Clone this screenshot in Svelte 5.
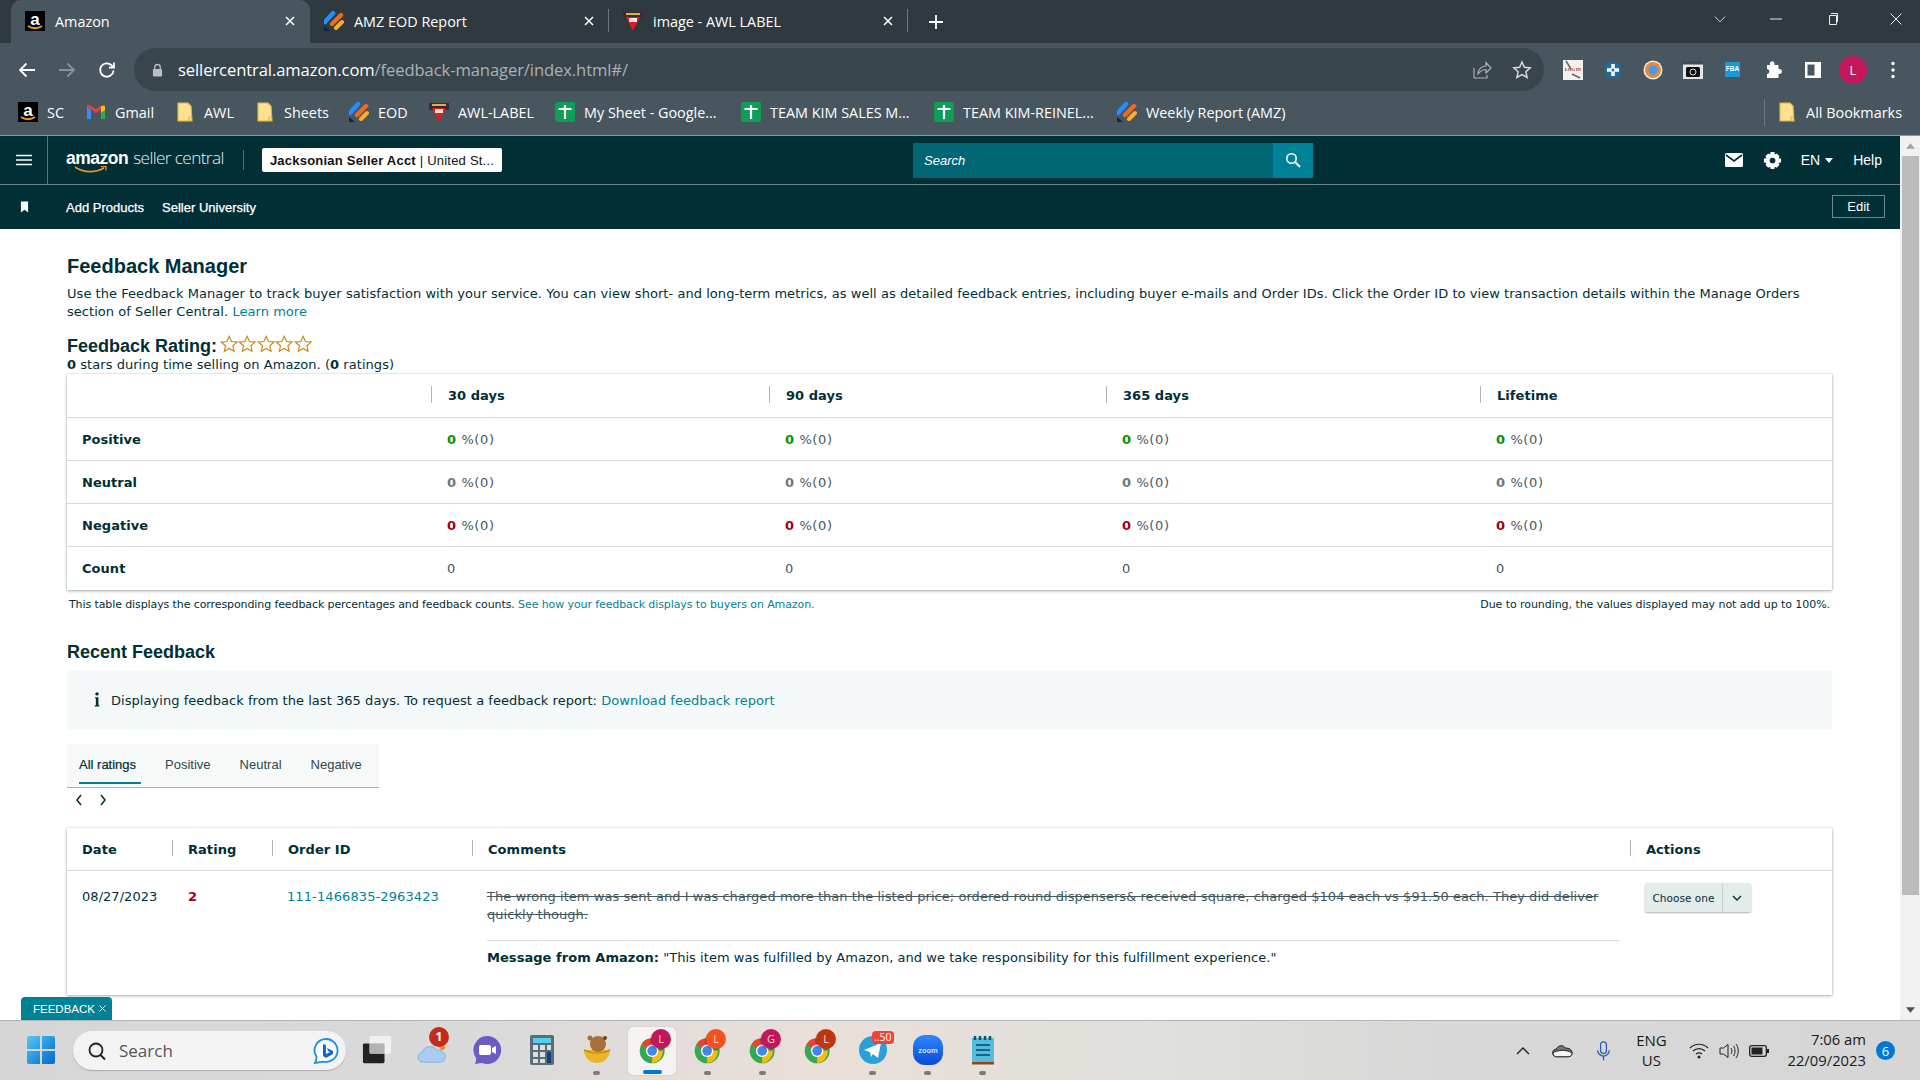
<script>
  const tabs = [
    { icon: 'amazon', title: 'Amazon', active: true },
    { icon: 'eod', title: 'AMZ EOD Report' },
    { icon: 'awl', title: 'image - AWL LABEL' }
  ];
  const marks = [
    { icon: 'amazon', label: 'SC', w: 68 },
    { icon: 'gmail', label: 'Gmail', w: 89 },
    { icon: 'folder', label: 'AWL', w: 80 },
    { icon: 'folder', label: 'Sheets', w: 94 },
    { icon: 'eod', label: 'EOD', w: 80 },
    { icon: 'awl', label: 'AWL-LABEL', w: 126 },
    { icon: 'sheet', label: 'My Sheet - Google...', w: 186 },
    { icon: 'sheet', label: 'TEAM KIM SALES M...', w: 193 },
    { icon: 'sheet', label: 'TEAM KIM-REINEL...', w: 183 },
    { icon: 'eod', label: 'Weekly Report (AMZ)', w: 200 }
  ];
  const ratingCols = ['30 days', '90 days', '365 days', 'Lifetime'];
  const ratingRows = [
    { name: 'Positive', cls: 'good' },
    { name: 'Neutral', cls: 'neutral' },
    { name: 'Negative', cls: 'bad' }
  ];
  const chromes = [
    { badge: 'L', col: '#c2185b', cls: 'tile' },
    { badge: 'L', col: '#f4511e', cls: '' },
    { badge: 'G', col: '#c2185b', cls: '' },
    { badge: 'L', col: '#bf360c', cls: '' }
  ];
</script>

{#snippet favicon(kind)}
  {#if kind === 'amazon'}
    <svg class="fav" viewBox="0 0 20 20"><rect width="20" height="20" fill="#000"/><text x="10" y="13.5" text-anchor="middle" class="favA">a</text><path d="M3 15c4 3 10 3 14 0" fill="none" stroke="#f09a1a" stroke-width="1.8"/></svg>
  {:else if kind === 'eod'}
    <svg class="fav" viewBox="0 0 20 20"><path d="M1 11 9 2" stroke="#1e90ff" stroke-width="4.4" stroke-linecap="round"/><path d="M8 13 17 4" stroke="#f26a1b" stroke-width="4.4" stroke-linecap="round"/><path d="M12 17 18 11" stroke="#f9b02a" stroke-width="4" stroke-linecap="round"/><path d="M0 15 6 20H0z" fill="#12214e"/></svg>
  {:else if kind === 'awl'}
    <svg class="fav" viewBox="0 0 20 20"><rect y="1" width="20" height="7" fill="#3b2a33"/><path d="M3 6h14l-7 14z" fill="#e01b24"/><path d="M6 7h8v4H6z" fill="#f5e5e5"/><rect x="3" y="2" width="14" height="2" fill="#e0b040"/></svg>
  {:else if kind === 'gmail'}
    <svg class="fav" viewBox="0 0 20 20"><path d="M1 4v13h4V8z" fill="#4285f4"/><path d="M19 4v13h-4V8z" fill="#34a853"/><path d="M1 4l9 7 9-7-1.500-1.500L10 7 2.500 2.500z" fill="#ea4335"/><path d="M15 4h4v4l-4 3z" fill="#fbbc04"/></svg>
  {:else if kind === 'folder'}
    <svg class="fav" viewBox="0 0 20 20"><path d="M3 1h10l3 3 1 15H3z" fill="#fde293" stroke="#e2b53f" stroke-width="1.200"/><path d="M14 19v-4h3" fill="none" stroke="#e2b53f" stroke-width="1.200"/></svg>
  {:else if kind === 'sheet'}
    <svg class="fav" viewBox="0 0 20 20"><rect width="20" height="20" rx="2" fill="#0f9d58"/><path d="M3.500 7h13M10 3v14" stroke="#fff" stroke-width="2.200"/></svg>
  {/if}
{/snippet}

{#snippet chrome(b)}
  <svg class="appicon" viewBox="0 0 36 36">
    <circle cx="17" cy="19" r="15" fill="#34a853"/>
    <path d="M17 19 4 11.500A15 15 0 0 1 30 11.500z" fill="#ea4335"/>
    <path d="M17 19H30A15 15 0 0 1 17 34z" fill="#fbbc04"/>
    <circle cx="17" cy="19" r="7.500" fill="#fff"/>
    <circle cx="17" cy="19" r="5.800" fill="#4285f4"/>
  </svg>
  <span class="dotbadge" style="background:{b.col}">{b.badge}</span>
{/snippet}

<div class="screen">
  <!-- Browser chrome -->
  <header class="tabstrip">
    {#each tabs as t, i}
      <div class="tab" class:active={t.active}>
        {@render favicon(t.icon)}
        <span class="tabtitle">{t.title}</span>
        <svg class="tabx" viewBox="0 0 10 10"><path d="M1 1l8 8M9 1l-8 8" stroke="#fff" stroke-width="1.500"/></svg>
        {#if i > 0}<i class="tabsep"></i>{/if}
      </div>
    {/each}
    <svg class="plus" viewBox="0 0 16 16"><path d="M8 1v14M1 8h14" stroke="#fff" stroke-width="1.800"/></svg>
    <div class="winctl">
      <svg viewBox="0 0 12 12" class="w1"><path d="M1 3.500 6 9l5-5.500" fill="none" stroke="#c8cdd0"/></svg>
      <svg viewBox="0 0 12 12" class="w2"><path d="M0 6h12" stroke="#e8eaeb"/></svg>
      <svg viewBox="0 0 12 12" class="w3"><path d="M2.500 2.500h7v9h-7zM4 .5h6.500V9" fill="none" stroke="#e8eaeb"/></svg>
      <svg viewBox="0 0 12 12" class="w4"><path d="M.5.500l11 11M11.500.5l-11 11" stroke="#e8eaeb"/></svg>
    </div>
  </header>

  <div class="toolbar">
    <svg class="navb" viewBox="0 0 20 20"><path d="M18 10H3M9.500 3.500 3 10l6.500 6.500" fill="none" stroke="#fff" stroke-width="1.800"/></svg>
    <svg class="navb" viewBox="0 0 20 20"><path d="M2 10h15M10.500 3.500 17 10l-6.500 6.500" fill="none" stroke="#87929a" stroke-width="1.800"/></svg>
    <svg class="navb" viewBox="0 0 20 20"><path d="M16.500 10.500a6.700 6.700 0 1 1-2-5.300L17 7.500M17 2.500v5h-5" fill="none" stroke="#fff" stroke-width="1.800"/></svg>
    <div class="omni">
      <svg class="lock" viewBox="0 0 12 14"><path d="M3 6V4a3 3 0 0 1 6 0v2" fill="none" stroke="#b8bec2" stroke-width="1.400"/><rect x="1" y="6" width="10" height="8" rx="1" fill="#b8bec2"/></svg>
      <span class="url"><b>sellercentral.amazon.com</b>/feedback-manager/index.html#/</span>
      <svg class="share" viewBox="0 0 20 20"><path d="M2 8v10h13v-3M6 14c0-5 4-8 8-8V2.500l5 5.500-5 5V9.500c-4 0-6 2-8 4.500z" fill="none" stroke="#aab1b6" stroke-width="1.200"/></svg>
      <svg class="star" viewBox="0 0 20 20"><path d="M10 2l2.400 5.300 5.800.6-4.300 3.900 1.200 5.700-5.100-2.900-5.100 2.900 1.200-5.700L1.800 7.900l5.800-.6z" fill="none" stroke="#d5d9dc" stroke-width="1.500"/></svg>
    </div>
    <div class="exts">
      <span class="ext"><svg viewBox="0 0 20 20"><rect width="20" height="20" fill="#f4f1ec"/><path d="M3 1l5 8M9 14l8 4" stroke="#666" stroke-width="1.500"/><text x="10" y="11" text-anchor="middle" class="login">LOG IN</text></svg></span>
      <span class="ext"><svg viewBox="0 0 20 20"><circle cx="10" cy="10" r="8.500" fill="#1c6da3"/><path d="M10 4v12M4 10h12" stroke="#fff" stroke-width="3.500"/><circle cx="10" cy="10" r="1.500" fill="#1c6da3"/></svg></span>
      <span class="ext"><svg viewBox="0 0 20 20"><circle cx="10" cy="10" r="9.500" fill="#eef0ef"/><circle cx="10" cy="10" r="8" fill="#e8883a"/><circle cx="10" cy="10" r="4.500" fill="#3f9cf0"/></svg></span>
      <span class="ext"><svg viewBox="0 0 20 20"><rect y="1" width="20" height="18" fill="#e4e7e7"/><rect y="1" width="20" height="3.500" fill="#46485a"/><rect x="3" y="7" width="14" height="10" rx="1.500" fill="#111"/><circle cx="10" cy="12" r="3" fill="none" stroke="#ddd"/></svg></span>
      <span class="ext"><svg viewBox="0 0 20 20"><rect x="2" y="2" width="15" height="15" fill="#169bd7"/><text x="9.500" y="11" text-anchor="middle" class="fba">FBA</text></svg></span>
      <span class="ext"><svg viewBox="0 0 20 20"><path d="M7 3a2.300 2.300 0 0 1 4.500 0v2h4v4h1a2.500 2.500 0 0 1 0 5h-1v4H4v-4a2.500 2.500 0 0 0 0-5V5h3z" fill="#fff"/></svg></span>
      <span class="ext"><svg viewBox="0 0 20 20"><path d="M2 2h16v16H2zM4.500 4.500v11h7v-11z" fill="#fff" fill-rule="evenodd"/></svg></span>
      <span class="ext"><span class="avatar">L</span></span>
      <span class="ext"><svg viewBox="0 0 20 20"><circle cx="10" cy="3.500" r="1.700" fill="#fff"/><circle cx="10" cy="10" r="1.700" fill="#fff"/><circle cx="10" cy="16.500" r="1.700" fill="#fff"/></svg></span>
    </div>
  </div>

  <div class="bookmarks">
    {#each marks as m}
      <div class="mark" style="width:{m.w}px">{@render favicon(m.icon)}<span>{m.label}</span></div>
    {/each}
    <i class="marksep"></i>
    <div class="mark allmarks">{@render favicon('folder')}<span>All Bookmarks</span></div>
  </div>

  <!-- Page viewport -->
  <div class="viewport">
    <div class="page">
      <nav class="topnav">
        <div class="burger"><svg viewBox="0 0 16 12"><path d="M0 1.500h16M0 6h16M0 10.500h16" stroke="#fff" stroke-width="1.600"/></svg></div>
        <div class="logo">
          <span class="lgA">amazon</span><span class="lgB">seller central</span>
          <svg class="smile" viewBox="0 0 34 8"><path d="M1 1c9 6 20 6 29 1" fill="none" stroke="#e8912d" stroke-width="1.600"/><path d="M27 .500h5v4" fill="none" stroke="#e8912d" stroke-width="1.300"/></svg>
        </div>
        <i class="navsep"></i>
        <div class="acct"><b>Jacksonian Seller Acct</b> | United St...</div>
        <div class="search">
          <span class="searchin">Search</span>
          <span class="searchbtn"><svg viewBox="0 0 16 16"><circle cx="6.500" cy="6.500" r="4.700" fill="none" stroke="#fff" stroke-width="1.600"/><path d="M10 10l5 5" stroke="#fff" stroke-width="2"/></svg></span>
        </div>
        <div class="navright">
          <svg class="mail" viewBox="0 0 18 14"><rect width="18" height="14" rx="1.500" fill="#fff"/><path d="M1 2l8 6 8-6" fill="none" stroke="#002f36" stroke-width="1.600"/></svg>
          <svg class="gear" viewBox="0 0 20 20"><path d="M8 1h4l.500 2.600 2-1 2.900 2.900-1.200 2.100L19 8v4l-2.800.500 1.200 2.100-2.900 2.900-2-1L12 19H8l-.5-2.500-2 1-2.900-2.900 1.200-2.100L1 12V8l2.800-.4-1.200-2.100 2.900-2.900 2 1z" fill="#fff"/><circle cx="10" cy="10" r="3" fill="#002f36"/></svg>
          <span class="lang">EN</span><i class="caret"></i>
          <span class="help">Help</span>
        </div>
      </nav>
      <nav class="subnav">
        <svg class="bm" viewBox="0 0 10 12"><path d="M1 0h8v12L5 9l-4 3z" fill="#fff"/></svg>
        <a>Add Products</a>
        <a>Seller University</a>
        <span class="editbtn">Edit</span>
      </nav>

      <main class="content">
        <h1>Feedback Manager</h1>
        <p class="intro">Use the Feedback Manager to track buyer satisfaction with your service. You can view short- and long-term metrics, as well as detailed feedback entries, including buyer e-mails and Order IDs. Click the Order ID to view transaction details within the Manage Orders section of Seller Central. <a>Learn more</a></p>
        <div class="ratinghead">
          <h2>Feedback Rating:</h2>
          <div class="stars">
            {#each Array(5) as _}
              <svg viewBox="0 0 20 20"><path d="M10 1.500l2.500 5.600 6 .6-4.500 4 1.300 6L10 14.600l-5.300 3.100 1.300-6-4.500-4 6-.6z" fill="none" stroke="#c98a1c" stroke-width="1.300"/></svg>
            {/each}
          </div>
        </div>
        <p class="sub"><b>0</b> stars during time selling on Amazon. (<b>0</b> ratings)</p>

        <table class="card metrics">
          <colgroup><col style="width:364px"/><col style="width:338px"/><col style="width:337px"/><col style="width:374px"/><col/></colgroup>
          <thead>
            <tr><th></th>{#each ratingCols as c}<th class="sep">{c}</th>{/each}</tr>
          </thead>
          <tbody>
            {#each ratingRows as r}
              <tr>
                <th>{r.name}</th>
                {#each ratingCols as c}<td class="sep"><b class={r.cls}>0</b> %(0)</td>{/each}
              </tr>
            {/each}
            <tr><th>Count</th>{#each ratingCols as c}<td class="sep">0</td>{/each}</tr>
          </tbody>
        </table>
        <div class="tablenote">
          <span>This table displays the corresponding feedback percentages and feedback counts. <a>See how your feedback displays to buyers on Amazon.</a></span>
          <span>Due to rounding, the values displayed may not add up to 100%.</span>
        </div>

        <h2 class="recent">Recent Feedback</h2>
        <div class="info">
          <svg viewBox="0 0 6 16"><circle cx="3" cy="2" r="1.800" fill="#002f36"/><path d="M1 5.500h3.500V14H5.500v1.500H.6V14h1.200V7H1z" fill="#002f36"/></svg>
          <span>Displaying feedback from the last 365 days. To request a feedback report: <a>Download feedback report</a></span>
        </div>

        <div class="rtabs">
          <span class="rtab on">All ratings</span>
          <span class="rtab">Positive</span>
          <span class="rtab">Neutral</span>
          <span class="rtab">Negative</span>
        </div>
        <div class="pager">
          <svg viewBox="0 0 8 12"><path d="M6 1 2 6l4 5" fill="none" stroke="#002f36" stroke-width="1.500"/></svg>
          <svg viewBox="0 0 8 12"><path d="M2 1l4 5-4 5" fill="none" stroke="#002f36" stroke-width="1.500"/></svg>
        </div>

        <table class="card feed">
          <colgroup><col style="width:105px"/><col style="width:100px"/><col style="width:200px"/><col style="width:1158px"/><col/></colgroup>
          <thead>
            <tr><th>Date</th><th class="sep">Rating</th><th class="sep">Order ID</th><th class="sep">Comments</th><th class="sep">Actions</th></tr>
          </thead>
          <tbody>
            <tr>
              <td>08/27/2023</td>
              <td class="sep"><b class="bad">2</b></td>
              <td class="sep"><a>111-1466835-2963423</a></td>
              <td class="sep cmt">
                <p class="strike">The wrong item was sent and I was charged more than the listed price; ordered round dispensers&amp; received square, charged $104 each vs $91.50 each. They did deliver quickly though.</p>
                <p class="msg"><b>Message from Amazon:</b> "This item was fulfilled by Amazon, and we take responsibility for this fulfillment experience."</p>
              </td>
              <td class="sep act">
                <div class="choose"><span>Choose one</span><i><svg viewBox="0 0 10 6"><path d="M1 1l4 4 4-4" fill="none" stroke="#002f36" stroke-width="1.400"/></svg></i></div>
              </td>
            </tr>
          </tbody>
        </table>
      </main>
      <div class="fbadge">FEEDBACK <svg viewBox="0 0 8 8"><path d="M.5.500l7 7M7.500.5l-7 7" stroke="#fff"/></svg></div>
    </div>
    <div class="scrollbar">
      <svg class="arrow" viewBox="0 0 10 6"><path d="M5 0l5 6H0z" fill="#a3a3a3"/></svg>
      <div class="thumb"></div>
      <svg class="arrow down" viewBox="0 0 10 6"><path d="M5 6 10 0H0z" fill="#505050"/></svg>
    </div>
  </div>

  <!-- Windows taskbar -->
  <footer class="taskbar">
    <div class="slot">
      <svg class="appicon" viewBox="0 0 30 30"><defs><linearGradient id="winG" x1="0" y1="0" x2="1" y2="1"><stop offset="0" stop-color="#53c8f8"/><stop offset="1" stop-color="#0068c8"/></linearGradient></defs><path d="M1 3a2 2 0 0 1 2-2h11v13H1zM16 1h11a2 2 0 0 1 2 2v11H16zM1 16h13v13H3a2 2 0 0 1-2-2zM16 16h13v11a2 2 0 0 1-2 2H16z" fill="url(#winG)"/></svg>
    </div>
    <div class="tsearch">
      <svg class="mag" viewBox="0 0 20 20"><circle cx="9" cy="9" r="6.500" fill="none" stroke="#222" stroke-width="1.800"/><path d="M13.500 14l4.500 4.500" stroke="#222" stroke-width="2"/></svg>
      <span>Search</span>
      <svg class="bing" viewBox="0 0 26 26"><path d="M13 1a11.500 11.500 0 1 1-3 22.600L2 25c1-2 1.500-3 1.600-6A11.500 11.500 0 0 1 13 1z" fill="#fff" stroke="#1b8fe0" stroke-width="1.800"/><path d="M10 6l3 1v9l4-2-2-1-1-3 6 3v3l-7 4-3-2z" fill="#1565d8"/></svg>
    </div>
    <div class="slot">
      <svg class="appicon" viewBox="0 0 32 32"><rect x="1" y="9" width="23" height="21" rx="1.500" fill="#222"/><rect x="8" y="1" width="23" height="19" rx="1.500" fill="#f3f3f3" opacity=".85"/><rect x="8" y="9" width="16" height="11" fill="#aaa" opacity=".8"/></svg>
    </div>
    <div class="slot">
      <svg class="appicon" viewBox="0 0 32 32"><path d="M7 29a5.500 5.500 0 0 1-1-11c1-6 11-8 15-2 5 0 10 3 9 8 0 3-2 5-5 5z" fill="#a9cdf0" stroke="#7eb0e2"/><circle cx="27" cy="13" r="3" fill="#ef8b2c"/></svg>
      <span class="numbadge">1</span>
    </div>
    <div class="slot">
      <svg class="appicon" viewBox="0 0 30 30"><path d="M15 1a14 14 0 1 1-5 27l-7 1c1-2 1-4 1-6A14 14 0 0 1 15 1z" fill="#6a5cc4"/><rect x="7" y="10" width="12" height="10" rx="2" fill="#fff"/><path d="M20 13l4-2v8l-4-2z" fill="#fff"/></svg>
    </div>
    <div class="slot">
      <svg class="appicon" viewBox="0 0 24 30"><rect width="24" height="30" rx="2" fill="#5b6c78"/><rect x="3" y="3" width="18" height="5" fill="#4fd0f0"/><path d="M3 10h5v5H3zM10 10h5v5h-5zM3 17h5v5H3zM10 17h5v5h-5zM3 24h5v4H3zM10 24h5v4h-5zM17 10h4v5h-4z" fill="#d8dfe3"/><rect x="17" y="17" width="4" height="11" fill="#13417f"/></svg>
    </div>
    <div class="slot bear">
      <svg class="appicon" viewBox="0 0 30 30"><path d="M2 15h26a13 13 0 0 1-26 0z" fill="#edb42b"/><circle cx="16" cy="9" r="8" fill="#a5703b"/><circle cx="8" cy="3" r="2.500" fill="#a5703b"/><circle cx="23" cy="3" r="2" fill="#6b4423"/><path d="M2 15c8 4 18 4 26 0" fill="none" stroke="#c48b17" stroke-width="1.500"/></svg>
      <i class="run"></i>
    </div>
    {#each chromes as c, i}
      <div class="slot {c.cls}">
        {@render chrome(c)}
        {#if i === 0}<i class="run on"></i>{:else if i < 3}<i class="run"></i>{/if}
      </div>
    {/each}
    <div class="slot">
      <svg class="appicon" viewBox="0 0 30 30"><circle cx="15" cy="15" r="14" fill="#2a9fd9"/><path d="M6 15l17-7-3 15-5-4-2 3-1-5z" fill="#fff"/></svg>
      <span class="tgbadge">..50</span><i class="run"></i>
    </div>
    <div class="slot">
      <svg class="appicon" viewBox="0 0 30 30"><defs><linearGradient id="zm" x1="0" y1="0" x2="0" y2="1"><stop offset="0" stop-color="#2f86ff"/><stop offset="1" stop-color="#0a4bd8"/></linearGradient></defs><rect width="30" height="30" rx="12" fill="url(#zm)"/><text x="15" y="17.500" text-anchor="middle" class="zoomt">zoom</text></svg>
      <i class="run"></i>
    </div>
    <div class="slot">
      <svg class="appicon" viewBox="0 0 24 30"><rect x="1" y="3" width="22" height="24" fill="#56bbdd"/><rect x="1" y="27" width="22" height="2.500" fill="#8d4a16"/><path d="M4 1v4M9 1v4M14 1v4M19 1v4" stroke="#11506f" stroke-width="2.500"/><path d="M5 10h14M5 15h14M5 20h14" stroke="#11648c" stroke-width="2"/></svg>
      <i class="run"></i>
    </div>

    <div class="tray">
      <svg class="t-chev" viewBox="0 0 14 8"><path d="M1 7l6-6 6 6" fill="none" stroke="#222" stroke-width="1.400"/></svg>
      <svg class="t-cloud" viewBox="0 0 22 14"><path d="M5 13a4 4 0 0 1-.5-8C6 1 12 0 14 4c4-.5 7 2 7 5 0 2-1 4-4 4z" fill="#6f7680" stroke="#222"/><path d="M1 9c4-3 14-4 20 0 0 2-1 4-4 4H5c-2 0-4-1-4-4z" fill="#f5f5f5" stroke="#222"/></svg>
      <svg class="t-mic" viewBox="0 0 16 24"><rect x="4.500" y="1" width="7" height="14" rx="3.500" fill="none" stroke="#2a5db0" stroke-width="1.500"/><path d="M1 11a7 7 0 0 0 14 0M8 18v5" fill="none" stroke="#2a5db0" stroke-width="1.500"/></svg>
      <div class="t-lang"><span>ENG</span><span>US</span></div>
      <svg class="t-wifi" viewBox="0 0 20 16"><path d="M1 5c5-5 13-5 18 0M4 8c3.500-3.200 8.500-3.200 12 0M7 11c2-1.500 4-1.500 6 0" fill="none" stroke="#222" stroke-width="1.200"/><circle cx="10" cy="14" r="1.500" fill="#222"/></svg>
      <svg class="t-vol" viewBox="0 0 20 16"><path d="M1 5h3.500L9 1.500v13L4.500 11H1z" fill="none" stroke="#222"/><path d="M12 5c1.200 2 1.200 4 0 6M14.500 3c2 3 2 7 0 10M17 1c3 4 3 10 0 14" fill="none" stroke="#222"/></svg>
      <svg class="t-bat" viewBox="0 0 20 12"><rect x=".7" y=".7" width="16.600" height="10.600" rx="2" fill="none" stroke="#222" stroke-width="1.300"/><rect x="2.500" y="2.500" width="11" height="7" fill="#222"/><rect x="18" y="4" width="2" height="4" fill="#222"/></svg>
      <div class="t-clock"><span>7:06 am</span><span>22/09/2023</span></div>
      <span class="t-note">6</span>
    </div>
  </footer>
</div>

<style>
  :global(body) { margin: 0; overflow: hidden; }
  .screen { width: 1920px; height: 1080px; display: flex; flex-direction: column; overflow: hidden; font-family: "DejaVu Sans", sans-serif; }
  .fav { width: 20px; height: 20px; flex: none; }
  .favA { font: 700 17px "Liberation Sans", sans-serif; fill: #fff; }

  /* tab strip */
  .tabstrip { height: 43px; background: #2f3a40; display: flex; align-items: stretch; padding-left: 11px; flex: none; }
  .tab { width: 299px; position: relative; display: flex; align-items: center; gap: 10px; padding: 0 0 1px 14px; box-sizing: border-box; color: #fff; font: 14.400px "Open Sans", sans-serif; }
  .tab.active { background: #47565f; border-radius: 10px 10px 0 0; }
  .tabtitle { flex: 1; }
  .tabx { width: 10px; height: 10px; margin-right: 15px; }
  .tabsep { position: absolute; right: 0; top: 9px; bottom: 11px; width: 1px; background: #6b767c; }
  .plus { width: 16px; height: 16px; align-self: center; margin-left: 20px; }
  .winctl { margin-left: auto; display: flex; align-items: center; }
  .winctl svg { width: 12px; height: 12px; margin-bottom: 6px; }
  .w1 { margin-right: 44px; } .w2 { margin-right: 45px; } .w3 { margin-right: 51px; } .w4 { margin-right: 18px; }

  /* toolbar */
  .toolbar { height: 48px; background: #47565f; display: flex; align-items: flex-start; padding: 5px 0 0 17px; box-sizing: border-box; flex: none; }
  .navb { width: 20px; height: 20px; margin: 12px 20px 0 0; }
  .toolbar .navb:nth-child(3) { margin-right: 17px; }
  .omni { width: 1410px; height: 43px; border-radius: 22px; background: #39454c; display: flex; align-items: center; padding-left: 18px; box-sizing: border-box; }
  .lock { width: 11px; height: 14px; margin-right: 15px; flex: none; }
  .url { font: 16.600px "Open Sans", sans-serif; color: #a9b2b7; flex: 1; letter-spacing: -0.1px; }
  .url b { font-weight: 400; color: #fff; }
  .share { width: 20px; height: 20px; margin-right: 20px; }
  .star { width: 20px; height: 20px; margin-right: 12px; }
  .exts { display: flex; margin-left: 9px; }
  .ext { width: 40px; height: 43px; display: flex; align-items: center; justify-content: center; }
  .ext svg { width: 20px; height: 20px; }
  .login { font: 700 4.500px "Liberation Serif", serif; fill: #9a2020; }
  .fba { font: 700 6.500px "Liberation Sans", sans-serif; fill: #fff; }
  .avatar { width: 28px; height: 28px; border-radius: 50%; background: #c2185b; color: #fff; font: 13px "Open Sans", sans-serif; display: flex; align-items: center; justify-content: center; }

  /* bookmarks */
  .bookmarks { height: 45px; background: #47565f; display: flex; align-items: center; padding: 0 18px 2px; box-sizing: border-box; border-bottom: 1px solid #88939a; flex: none; }
  .mark { display: flex; align-items: center; gap: 9px; color: #fff; font: 14.400px "Open Sans", sans-serif; white-space: nowrap; flex: none; }
  .marksep { width: 1px; height: 27px; background: #6d7a82; margin-left: auto; }
  .allmarks { margin-left: 12px; }

  /* viewport */
  .viewport { height: 884px; display: flex; flex: none; }
  .page { width: 1900px; flex: none; position: relative; overflow: hidden; background: #fff; color: #002f36; }
  .scrollbar { flex: 1; background: #f1f1f1; display: flex; flex-direction: column; align-items: center; }
  .arrow { width: 9px; height: 6px; margin: 7px 0; flex: none; }
  .thumb { width: 17px; height: 739px; background: #bcbcbc; margin-top: 0; }
  .down { margin-top: auto; }

  .topnav { height: 48px; background: #002f36; border-bottom: 1px solid #6f878c; display: flex; align-items: center; box-sizing: content-box; color: #fff; }
  .burger { width: 47px; height: 48px; border-right: 1px solid #5b7479; display: flex; align-items: center; justify-content: center; box-sizing: content-box; }
  .burger svg { width: 16px; height: 12px; }
  .logo { position: relative; margin: -2px 0 0 18px; width: 177px; display: flex; align-items: baseline; gap: 5px; height: 26px; }
  .lgA { font: 700 17.500px "Liberation Sans", sans-serif; letter-spacing: -0.5px; }
  .lgB { font: 300 17.200px "Open Sans", sans-serif; letter-spacing: -0.6px; color: #e9eeee; }
  .smile { position: absolute; left: 8px; top: 20px; width: 34px; height: 8px; }
  .navsep { width: 1px; height: 20px; background: #587075; margin-right: 18px; }
  .acct { width: 240px; height: 24px; background: #fff; border-radius: 2px; color: #0f1111; font: 13px "Liberation Sans", sans-serif; letter-spacing: .22px; display: flex; align-items: center; justify-content: center; white-space: pre; }
  .acct b { font-weight: 700; }
  .search { margin-left: 411px; width: 400px; height: 35px; background: #006574; display: flex; align-items: center; justify-content: space-between; }
  .searchin { font: italic 13px "Liberation Sans", sans-serif; color: #fff; padding-left: 11px; }
  .searchbtn { width: 40px; height: 35px; background: #008296; display: flex; align-items: center; justify-content: center; }
  .searchbtn svg { width: 16px; height: 16px; }
  .navright { margin-left: auto; display: flex; align-items: center; padding-right: 18px; }
  .mail { width: 18px; height: 14px; margin-right: 20px; }
  .gear { width: 19px; height: 19px; margin-right: 19px; }
  .lang { font: 14px "Liberation Sans", sans-serif; }
  .caret { width: 0; height: 0; border: 4px solid transparent; border-top: 5px solid #fff; border-bottom: 0; margin: 0 20px 0 5px; }
  .help { font: 14px "Liberation Sans", sans-serif; }

  .subnav { height: 44px; background: #002f36; display: flex; align-items: center; color: #fff; font: 13px "Liberation Sans", sans-serif; }
  .bm { width: 9px; height: 12px; margin: -1px 37px 0 20px; }
  .subnav a { margin-right: 18px; color: #fff; -webkit-text-stroke: .25px #fff; }
  .editbtn { margin-left: auto; margin-right: 15px; width: 53px; height: 23px; box-sizing: border-box; border: 1px solid #6f878c; display: flex; align-items: center; justify-content: center; font-size: 13px; position: relative; top: -1px; }

  /* content */
  .content { padding: 0 68px 0 67px; font-size: 13px; line-height: 18px; letter-spacing: .045px; }
  a { color: #008296; }
  h1, h2 { font-family: "Liberation Sans", sans-serif; font-weight: 700; margin: 0; color: #002f36; letter-spacing: 0; }
  h1 { font-size: 20px; line-height: 24px; padding-top: 25px; }
  .intro { margin: 7px 0 0; }
  .ratinghead { display: flex; align-items: center; margin-top: 13px; height: 24px; }
  h2 { font-size: 18px; }
  .stars { display: flex; margin: -3px 0 0 3px; }
  .stars svg { width: 18.400px; height: 18.400px; }
  .sub { margin: -2px 0 0; line-height: 18px; }
  .card { width: 100%; border-collapse: separate; border-spacing: 0; table-layout: fixed; background: #fff; box-shadow: 0 1px 3px rgba(0,40,50,.35), 0 0 1px rgba(0,40,50,.3); margin: 0; }
  .card th { font-weight: 700; text-align: left; padding: 0 0 0 15px; border-bottom: 1px solid #d5dbdb; position: relative; }
  .card thead th { padding-top: 1px; }
  .card td { padding: 0 0 0 17px; border-bottom: 1px solid #d5dbdb; position: relative; }
  .card thead th.sep { padding-left: 16px; }
  .card thead th.sep::before { content: ""; position: absolute; left: 0; top: 12px; bottom: 14px; width: 1px; background: #aab7b8; }
  .card tr:last-child td, .card tbody tr:last-child th { border-bottom: 0; }
  .metrics { margin-top: 0; }
  .metrics thead th.sep { padding-left: 17px; }
  .metrics thead tr { height: 44px; }
  .metrics tbody tr { height: 43px; }
  .metrics tbody tr:not(:last-child) > * { padding-top: 1px; }
  .good { color: #067d06; } .neutral { color: #6c7778; } .bad { color: #a00013; }
  .metrics td { padding-left: 16px; color: #44595d; letter-spacing: .6px; }
  .metrics td b.good { color: #0a8f0a; }
  .tablenote { display: flex; justify-content: space-between; font-size: 11px; padding: 7px 2px 0; line-height: 16px; letter-spacing: -.1px; }
  .tablenote span:last-child { letter-spacing: -.06px; }
  .recent { margin-top: 28px; line-height: 22px; }
  .info { margin-top: 7px; height: 60px; background: #f5f8f8; display: flex; align-items: center; padding-left: 27px; }
  .info svg { width: 6px; height: 15px; margin-right: 11px; margin-top: -2px; }
  .info span { position: relative; top: 1px; }
  .rtabs { margin-top: 14px; width: 312px; height: 44px; background: #f7f8f8; border-bottom: 1px solid #aab7b8; display: flex; padding-left: 12px; box-sizing: border-box; font: 13px "Liberation Sans", sans-serif; letter-spacing: 0; gap: 29px; align-items: flex-start; padding-top: 13px; }
  .rtab { position: relative; padding-bottom: 0; height: 27px; color: #2c4a50; }
  .rtab.on { color: #002f36; -webkit-text-stroke: .2px #002f36; }
  .rtab.on::after { content: ""; position: absolute; left: 0; right: -5px; bottom: 0; height: 2px; background: #008296; }
  .pager { display: flex; gap: 16px; padding: 6px 0 0 8px; height: 13px; }
  .pager svg { width: 8px; height: 12px; }
  .feed { margin-top: 21px; }
  .feed thead tr { height: 43px; }
  .feed td { vertical-align: top; padding: 17px 0 0 15px; height: 107px; color: #002f36; line-height: 18px; border-bottom: 0; }
  .feed td.cmt { padding: 17px 10px 0 15px; }
  .feed td.sep:nth-child(2) { padding-left: 16px; }
  .feed td.sep:nth-child(3) { padding-left: 15px; }
  .feed td a { letter-spacing: .1px; }
  .strike { margin: 0; text-decoration: line-through; color: #44595d; }
  .msg { margin: 16px 0 0; padding-top: 8px; border-top: 1px solid #d5dbdb; }
  .act.act { padding: 12px 0 0 15px; }
  .choose { width: 106px; height: 29px; background: #e3ebeb; border-radius: 2px; box-shadow: 0 1px 2px rgba(0,30,40,.35); display: flex; align-items: center; font-size: 10.500px; color: #002f36; }
  .choose span { flex: 1; text-align: center; }
  .choose i { width: 28px; height: 29px; border-left: 1px solid #c9d2d2; display: flex; align-items: center; justify-content: center; }
  .choose svg { width: 10px; height: 6px; }
  .fbadge { position: absolute; left: 21px; bottom: 0; width: 91px; height: 23px; box-sizing: border-box; background: #008296; border-radius: 4px 4px 0 0; color: #fff; font: 11.500px "Liberation Sans", sans-serif; display: flex; align-items: center; gap: 4px; padding-left: 12px; }
  .fbadge svg { width: 7px; height: 7px; }

  /* taskbar */
  .taskbar { height: 60px; flex: none; box-sizing: border-box; border-top: 1px solid #b3b3b3; background: linear-gradient(90deg, #d6d6d6 0%, #dadada 25%, #eadfd9 42%, #e0e0dc 60%, #d8d8d8 75%, #d6d6d6 100%); display: flex; align-items: center; padding-left: 13px; position: relative; }
  .slot { width: 55px; height: 48px; position: relative; display: flex; align-items: center; justify-content: center; flex: none; }
  .slot.bear { margin-right: 1px; }
  .slot .appicon { width: 30px; height: 30px; margin-top: -1px; }
  .slot.tile::before { content: ""; position: absolute; left: 3px; right: 4px; top: 0; bottom: 0; background: #f4f3f2; border-radius: 5px; box-shadow: 0 0 1px rgba(0,0,0,.25); }
  .slot.tile > * { z-index: 1; }
  .tsearch { width: 273px; height: 39px; margin: 0 3px 0 5px; box-sizing: border-box; background: #f3f3f3; border-radius: 20px; box-shadow: 0 1px 1px rgba(0,0,0,.2); display: flex; align-items: center; padding-left: 14px; font: 17px "Open Sans", sans-serif; color: #555; flex: none; }
  .mag { width: 20px; height: 20px; margin-right: 12px; }
  .bing { width: 26px; height: 26px; margin-left: auto; margin-right: 7px; }
  .numbadge { position: absolute; left: 25px; top: 0; width: 20px; height: 20px; border-radius: 50%; background: #c42b1c; color: #fff; font: 700 12px "Open Sans", sans-serif; display: flex; align-items: center; justify-content: center; }
  .dotbadge { position: absolute; left: 26px; top: 2px; width: 20px; height: 20px; border-radius: 50%; color: #f6d9d9; font: 11px "Open Sans", sans-serif; display: flex; align-items: center; justify-content: center; box-shadow: -1px 1px 1px rgba(0,0,0,.25); }
  .tgbadge { position: absolute; left: 27px; top: 4px; height: 13px; padding: 0 2px; border-radius: 4px; background: #f04438; color: #fff; font: 10.500px "Open Sans", sans-serif; display: flex; align-items: center; }
  .zoomt { font: 700 7.500px "Liberation Sans", sans-serif; fill: #cfe2ff; }
  .run { position: absolute; left: 50%; bottom: 0; width: 7px; height: 4px; margin-left: -4px; border-radius: 2px; background: #7b7b7b; }
  .run.on { width: 19px; margin-left: -10px; background: #0078d4; bottom: 1px; height: 4px; }
  .tray { margin-left: auto; display: flex; align-items: center; color: #1a1a1a; font: 15px "Open Sans", sans-serif; padding-right: 25px; }
  .t-chev { width: 14px; height: 8px; margin-right: 22px; }
  .t-cloud { width: 21px; height: 14px; margin-right: 23px; }
  .t-mic { width: 15px; height: 20px; margin-right: 22px; }
  .t-lang { display: flex; flex-direction: column; align-items: center; line-height: 20px; margin: -2px 20px 0 0; width: 36px; }
  .t-wifi { width: 20px; height: 16px; margin-right: 10px; }
  .t-vol { width: 20px; height: 16px; margin-right: 10px; }
  .t-bat { width: 20px; height: 12px; margin-right: 18px; }
  .t-clock { display: flex; flex-direction: column; align-items: flex-end; line-height: 21px; margin: -2px 10px 0 0; font-size: 14.800px; }
  .t-note { width: 19px; height: 19px; border-radius: 50%; background: #0078d4; color: #fff; font-size: 13px; display: flex; align-items: center; justify-content: center; }
</style>
